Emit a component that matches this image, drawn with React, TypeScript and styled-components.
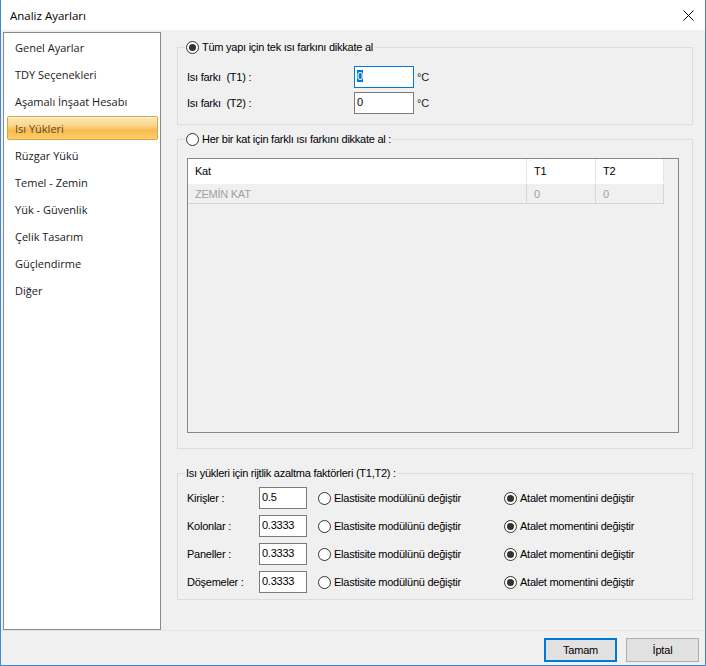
import React from "react";
import styled, { createGlobalStyle } from "styled-components";

const GlobalStyle = createGlobalStyle`
  html, body {
    margin: 0;
    padding: 0;
    width: 706px;
    height: 666px;
    overflow: hidden;
    background: #f0f0f0;
  }
  * { box-sizing: border-box; }
`;

const UI_FONT = `"Liberation Sans", Arial, sans-serif`;
const NAV_FONT = `"Open Sans", "Noto Sans", sans-serif`;

const Window = styled.div`
  width: 706px;
  height: 666px;
  display: flex;
  flex-direction: column;
  border-left: 1px solid #3a8ad6;
  border-right: 1px solid #3a8ad6;
  border-bottom: 1px solid #3a8ad6;
  background: #f0f0f0;
`;

const TitleBar = styled.div`
  height: 30px;
  flex: none;
  background: #ffffff;
  display: flex;
  align-items: center;
  justify-content: space-between;
  padding: 0 11px 0 9px;
  font-family: ${NAV_FONT};
  font-size: 11.5px;
  color: #000;
`;

const CloseGlyph = styled.svg`
  width: 11px;
  height: 11px;
  display: block;
`;

const Body = styled.div`
  flex: 1;
  display: flex;
  min-height: 0;
`;

const Sidebar = styled.nav`
  width: 158px;
  flex: none;
  margin: 2px 0 0 2px;
  border: 1px solid #8a8a8a;
  background: #ffffff;
  display: flex;
  flex-direction: column;
  gap: 3px;
  padding: 2px 2px 0 3px;
`;

const NavItem = styled.div<{ $active?: boolean }>`
  height: 24px;
  display: flex;
  align-items: center;
  padding-left: 7px;
  font-family: ${NAV_FONT};
  font-size: 11px;
  color: ${(p) => (p.$active ? "#5a4a36" : "#1a1a1a")};
  border-radius: 2px;
  border: 1px solid ${(p) => (p.$active ? "#e0a43e" : "transparent")};
  background: ${(p) =>
    p.$active
      ? "linear-gradient(to bottom, #fde9b8 0%, #fcd588 40%, #f9bb4e 60%, #fbcf6a 100%)"
      : "transparent"};
  box-shadow: ${(p) => (p.$active ? "inset 0 1px 0 rgba(255,255,255,0.6)" : "none")};
`;

const Main = styled.div`
  flex: 1;
  display: flex;
  flex-direction: column;
  padding: 10px 12px 0 16px;
  font-family: ${UI_FONT};
  font-size: 11px;
  letter-spacing: -0.25px;
  color: #000;
`;

const Group = styled.fieldset<{ $top?: number; $pad: string }>`
  margin: ${(p) => p.$top ?? 0}px 0 0 0;
  border: 1px solid #dcdcdc;
  padding: ${(p) => p.$pad};
  min-width: 0;
`;

const Legend = styled.legend`
  margin-left: -2px;
  padding: 0 2px 0 1px;
  height: 14px;
  line-height: 14px;
  display: flex;
  align-items: center;
  gap: 3px;
  font-family: ${UI_FONT};
  font-size: 11px;
  letter-spacing: -0.25px;
`;

const RadioCircle = styled.span<{ $checked?: boolean }>`
  width: 13px;
  height: 13px;
  flex: none;
  border-radius: 50%;
  border: 1px solid #333333;
  background: #ffffff;
  display: inline-flex;
  align-items: center;
  justify-content: center;
  &::after {
    content: "";
    width: 7px;
    height: 7px;
    border-radius: 50%;
    background: ${(p) => (p.$checked ? "#333333" : "transparent")};
  }
`;

const TempRows = styled.div`
  display: flex;
  flex-direction: column;
  gap: 4px;
`;

const TempRow = styled.div`
  display: grid;
  grid-template-columns: 167px 60px auto;
  align-items: center;
  height: 22px;
`;

const Unit = styled.span`
  padding-left: 3px;
  color: #222;
`;

const TextBox = styled.div<{ $w: number; $focused?: boolean }>`
  width: ${(p) => p.$w}px;
  height: 22px;
  background: #ffffff;
  border: 1px solid ${(p) => (p.$focused ? "#0078d7" : "#7a7a7a")};
  padding: 2px 0 0 2px;
  line-height: 14px;
  font-family: ${UI_FONT};
  font-size: 11px;
  white-space: nowrap;
`;

const Selected = styled.span`
  background: #0078d7;
  color: #ffffff;
`;

const Grid = styled.div`
  height: 275px;
  border: 1px solid #828790;
  background: #f0f0f0;
  display: flex;
  flex-direction: column;
`;

const GridRow = styled.div<{ $header?: boolean }>`
  display: grid;
  grid-template-columns: 339px 69px 68px;
  height: ${(p) => (p.$header ? 25 : 20)}px;
  width: 476px;
  background: ${(p) => (p.$header ? "#ffffff" : "#f0f0f0")};
  border-bottom: 1px solid ${(p) => (p.$header ? "#ffffff" : "#d5d5d5")};
`;

const Cell = styled.div<{ $header?: boolean }>`
  display: flex;
  align-items: center;
  padding-left: 7px;
  color: ${(p) => (p.$header ? "#000" : "#a0a0a0")};
  border-right: 1px solid ${(p) => (p.$header ? "#e5e5e5" : "#d5d5d5")};
`;

const FactorRows = styled.div`
  display: flex;
  flex-direction: column;
  gap: 6px;
`;

const FactorRow = styled.div`
  display: grid;
  grid-template-columns: 72px 48px 197px auto;
  align-items: center;
  height: 22px;
`;

const RadioOption = styled.label<{ $indent?: number }>`
  display: flex;
  align-items: center;
  gap: 3px;
  padding-left: ${(p) => p.$indent ?? 0}px;
`;

const Footer = styled.div`
  height: 35px;
  flex: none;
  border-top: 1px solid #e3e3e3;
  display: flex;
  justify-content: flex-end;
  gap: 9px;
  padding: 7px 6px 0 0;
`;

const Button = styled.button<{ $default?: boolean }>`
  width: 73px;
  height: 24px;
  font-family: ${UI_FONT};
  font-size: 11px;
  letter-spacing: -0.2px;
  color: #000;
  background: #e1e1e1;
  border: 1px solid ${(p) => (p.$default ? "#0078d7" : "#adadad")};
  box-shadow: ${(p) => (p.$default ? "inset 0 0 0 1px #0078d7" : "none")};
  padding: 0;
  margin: 0;
`;

const navItems = [
  "Genel Ayarlar",
  "TDY Seçenekleri",
  "Aşamalı İnşaat Hesabı",
  "Isı Yükleri",
  "Rüzgar Yükü",
  "Temel - Zemin",
  "Yük - Güvenlik",
  "Çelik Tasarım",
  "Güçlendirme",
  "Diğer",
];

const factors = [
  { label: "Kirişler :", value: "0.5" },
  { label: "Kolonlar :", value: "0.3333" },
  { label: "Paneller :", value: "0.3333" },
  { label: "Döşemeler :", value: "0.3333" },
];

export default function App() {
  return (
    <>
      <GlobalStyle />
      <Window>
        <TitleBar>
          <span>Analiz Ayarları</span>
          <CloseGlyph viewBox="0 0 11 11">
            <path d="M0.5 0.5 L10.5 10.5 M10.5 0.5 L0.5 10.5" stroke="#000" strokeWidth="1" fill="none" />
          </CloseGlyph>
        </TitleBar>
        <Body>
          <Sidebar>
            {navItems.map((n) => (
              <NavItem key={n} $active={n === "Isı Yükleri"}>
                {n}
              </NavItem>
            ))}
          </Sidebar>
          <Main>
            <Group $pad="12px 9px 10px 9px">
              <Legend>
                <RadioCircle $checked />
                Tüm yapı için tek ısı farkını dikkate al
              </Legend>
              <TempRows>
                <TempRow>
                  <span>Isı farkı&nbsp; (T1) :</span>
                  <TextBox $w={60} $focused>
                    <Selected>0</Selected>
                  </TextBox>
                  <Unit>°C</Unit>
                </TempRow>
                <TempRow>
                  <span>Isı farkı&nbsp; (T2) :</span>
                  <TextBox $w={60}>0</TextBox>
                  <Unit>°C</Unit>
                </TempRow>
              </TempRows>
            </Group>

            <Group $top={7} $pad="12px 13px 15px 9px">
              <Legend>
                <RadioCircle />
                Her bir kat için farklı ısı farkını dikkate al :
              </Legend>
              <Grid>
                <GridRow $header>
                  <Cell $header>Kat</Cell>
                  <Cell $header>T1</Cell>
                  <Cell $header>T2</Cell>
                </GridRow>
                <GridRow>
                  <Cell>ZEMİN KAT</Cell>
                  <Cell>0</Cell>
                  <Cell>0</Cell>
                </GridRow>
              </Grid>
            </Group>

            <Group $top={17} $pad="7px 9px 6px 9px">
              <Legend>Isı yükleri için rijtlik azaltma faktörleri (T1,T2) :</Legend>
              <FactorRows>
                {factors.map((f) => (
                  <FactorRow key={f.label}>
                    <span>{f.label}</span>
                    <TextBox $w={48}>{f.value}</TextBox>
                    <RadioOption $indent={11}>
                      <RadioCircle />
                      Elastisite modülünü değiştir
                    </RadioOption>
                    <RadioOption>
                      <RadioCircle $checked />
                      Atalet momentini değiştir
                    </RadioOption>
                  </FactorRow>
                ))}
              </FactorRows>
            </Group>
          </Main>
        </Body>
        <Footer>
          <Button $default>Tamam</Button>
          <Button>İptal</Button>
        </Footer>
      </Window>
    </>
  );
}
